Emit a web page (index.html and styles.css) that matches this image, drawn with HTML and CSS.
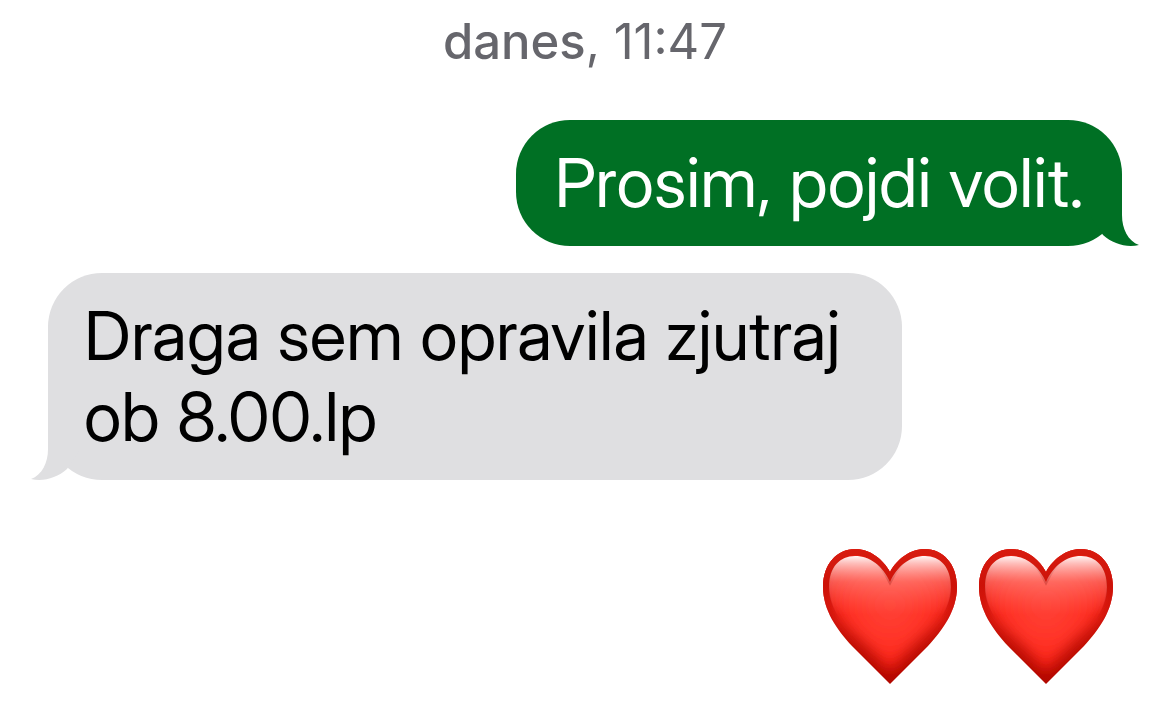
FILE: index.html
```html
<!DOCTYPE html>
<html lang="sl">
<head>
<meta charset="utf-8">
<meta name="viewport" content="width=device-width, initial-scale=1">
<title>Sporočila</title>
<link rel="stylesheet" href="styles.css">
</head>
<body>
<main class="thread">
  <time class="stamp" datetime="11:47"><strong class="day">danes</strong>, 11:47</time>
  <div class="bubble sent">
    <p class="text">Prosim, pojdi volit.</p>
    <svg class="tail" viewBox="0 0 48 60" aria-hidden="true"><path d="M31 0V28C31 42 37 54 48 58C36 61 22 57 12 48L0 30V0Z"/></svg>
  </div>
  <div class="bubble received">
    <p class="text">Draga sem opravila zjutraj<br>ob 8.00.lp</p>
    <svg class="tail" viewBox="0 0 48 60" aria-hidden="true"><path d="M31 0V28C31 42 37 54 48 58C36 61 22 57 12 48L0 30V0Z"/></svg>
  </div>
  <div class="hearts" role="img" aria-label="Dve rdeči srci">
    <svg class="heart" viewBox="0 0 136 136">
      <defs>
        <linearGradient id="rim" x1="0" y1="0" x2="0" y2="1"><stop offset="0" stop-color="#d81c10"/><stop offset=".4" stop-color="#cc1208"/><stop offset="1" stop-color="#b00800"/></linearGradient>
        <linearGradient id="outline" gradientUnits="userSpaceOnUse" x1="0" y1="0" x2="0" y2="72"><stop offset="0" stop-color="#d81c10"/><stop offset=".5" stop-color="#cc1208"/><stop offset="1" stop-color="#c01008" stop-opacity="0"/></linearGradient>
        <radialGradient id="body" gradientUnits="userSpaceOnUse" cx="68" cy="56" r="80"><stop offset="0" stop-color="#ff4236"/><stop offset=".5" stop-color="#ff3226"/><stop offset=".8" stop-color="#fa1e12"/><stop offset="1" stop-color="#d81208"/></radialGradient>
        <linearGradient id="shine" gradientUnits="userSpaceOnUse" x1="0" y1="6" x2="0" y2="66"><stop offset="0" stop-color="#fff"/><stop offset=".14" stop-color="#ffe4e2" stop-opacity=".8"/><stop offset=".45" stop-color="#ffb0aa" stop-opacity=".4"/><stop offset="1" stop-color="#ff8078" stop-opacity="0"/></linearGradient>
        <filter id="soft" x="-20%" y="-20%" width="140%" height="140%"><feGaussianBlur stdDeviation="7"/></filter>
        <clipPath id="edge"><path d="M68 135L30 97C15 81 1 61 1 38C1 15 15 0 33 0C48 0 61 10 68 23C75 10 88 0 103 0C121 0 135 15 135 38C135 61 121 81 106 97Z"/></clipPath>
        <g id="heart" clip-path="url(#edge)">
          <rect width="136" height="136" fill="url(#rim)"/>
          <path filter="url(#soft)" fill="url(#body)" d="M68 122L42 94C22 76 2 60 2 36C2 12 18 -4 33 -4C48 -4 61 5 68 20C75 5 88 -4 103 -4C118 -4 134 12 134 36C134 60 114 76 94 94Z"/>
          <path fill="none" stroke="url(#outline)" stroke-width="13" d="M68 135L30 97C15 81 1 61 1 38C1 15 15 0 33 0C48 0 61 10 68 23C75 10 88 0 103 0C121 0 135 15 135 38C135 61 121 81 106 97Z"/>
          <path fill="url(#shine)" d="M7 38C7 18 18 7 33 7C48 7 61 17 68 33C75 17 88 7 103 7C118 7 129 18 129 38C129 50 125 58 121 66H15C11 58 7 50 7 38Z"/>
        </g>
      </defs>
      <use href="#heart"/>
    </svg>
    <svg class="heart" viewBox="0 0 136 136"><use href="#heart"/></svg>
  </div>
</main>
</body>
</html>
```
FILE: styles.css
```css
* {
  box-sizing: border-box;
}

body {
  margin: 0;
  background: #fff;
  font-family: "Inter Display", Inter, "Liberation Sans", sans-serif;
}

.thread {
  display: flex;
  flex-direction: column;
  padding: 12px 48px 36px;
}

.stamp {
  align-self: center;
  color: #66666c;
  font-family: Inter, "Liberation Sans", sans-serif;
  font-size: 49px;
  line-height: 60px;
}

.day {
  font-weight: 500;
}

.bubble {
  position: relative;
  padding: 22px 38px 23px 36px;
  border-radius: 54px;
  font-size: 68px;
  line-height: 81px;
}

.text {
  margin: 0;
}

.sent {
  align-self: flex-end;
  margin-top: 48px;
  padding-left: 38px;
  background: #007024;
  color: #fff;
}

.received {
  align-self: flex-start;
  margin-top: 27px;
  padding-right: 62px;
  background: #dfdfe1;
  color: #000;
}

.tail {
  position: absolute;
  bottom: -1px;
  width: 48px;
  height: 60px;
}

.sent .tail {
  right: -17px;
  fill: #007024;
}

.received .tail {
  left: -17px;
  fill: #dfdfe1;
  transform: scaleX(-1);
}

.hearts {
  display: flex;
  align-self: flex-end;
  gap: 20px;
  margin-top: 69px;
  margin-right: 8px;
}

.heart {
  width: 136px;
  height: 136px;
}
```
